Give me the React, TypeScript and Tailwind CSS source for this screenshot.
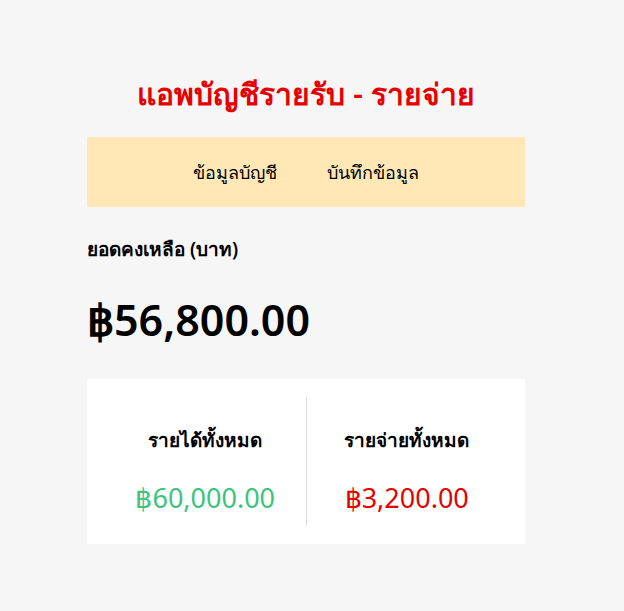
export default function App() {
  return (
    <div className="min-h-[611px] bg-[#f6f6f6] font-['Noto_Sans','Liberation_Sans',sans-serif]">
      <div className="ml-[87px] w-[438px] pt-[70px]">
        {/* หัวข้อ */}
        <h1 className="text-center text-[30px] font-semibold leading-[48px] text-[#e60000]">
          แอพบัญชีรายรับ - รายจ่าย
        </h1>

        {/* เมนู */}
        <nav className="mt-[19px] flex h-[70px] items-center justify-center gap-[50px] bg-[#ffe7b6] text-[18px] text-black">
          <a href="#">ข้อมูลบัญชี</a>
          <a href="#">บันทึกข้อมูล</a>
        </nav>

        {/* ยอดคงเหลือ */}
        <h4 className="mt-[28px] text-[19px] font-semibold leading-[28px] text-black">ยอดคงเหลือ (บาท)</h4>
        <h1 className="mt-[32px] text-[43px] font-semibold leading-[50px] text-black">฿56,800.00</h1>

        {/* รายรับ - รายจ่าย */}
        <div className="mt-[34px] flex bg-white p-[18px]">
          <div className="flex flex-1 flex-col items-center gap-[26px] pt-[30px] pb-[10px]">
            <h4 className="text-[19px] font-semibold leading-[27px] text-black">รายได้ทั้งหมด</h4>
            <p className="text-[27px] leading-[36px] text-[#3cc47c]">฿60,000.00</p>
          </div>
          <div className="flex flex-1 flex-col items-center gap-[26px] border-l border-[#dddddd] pt-[30px] pb-[10px]">
            <h4 className="text-[19px] font-semibold leading-[27px] text-black">รายจ่ายทั้งหมด</h4>
            <p className="text-[27px] leading-[36px] text-[#e60000]">฿3,200.00</p>
          </div>
        </div>
      </div>
    </div>
  );
}
